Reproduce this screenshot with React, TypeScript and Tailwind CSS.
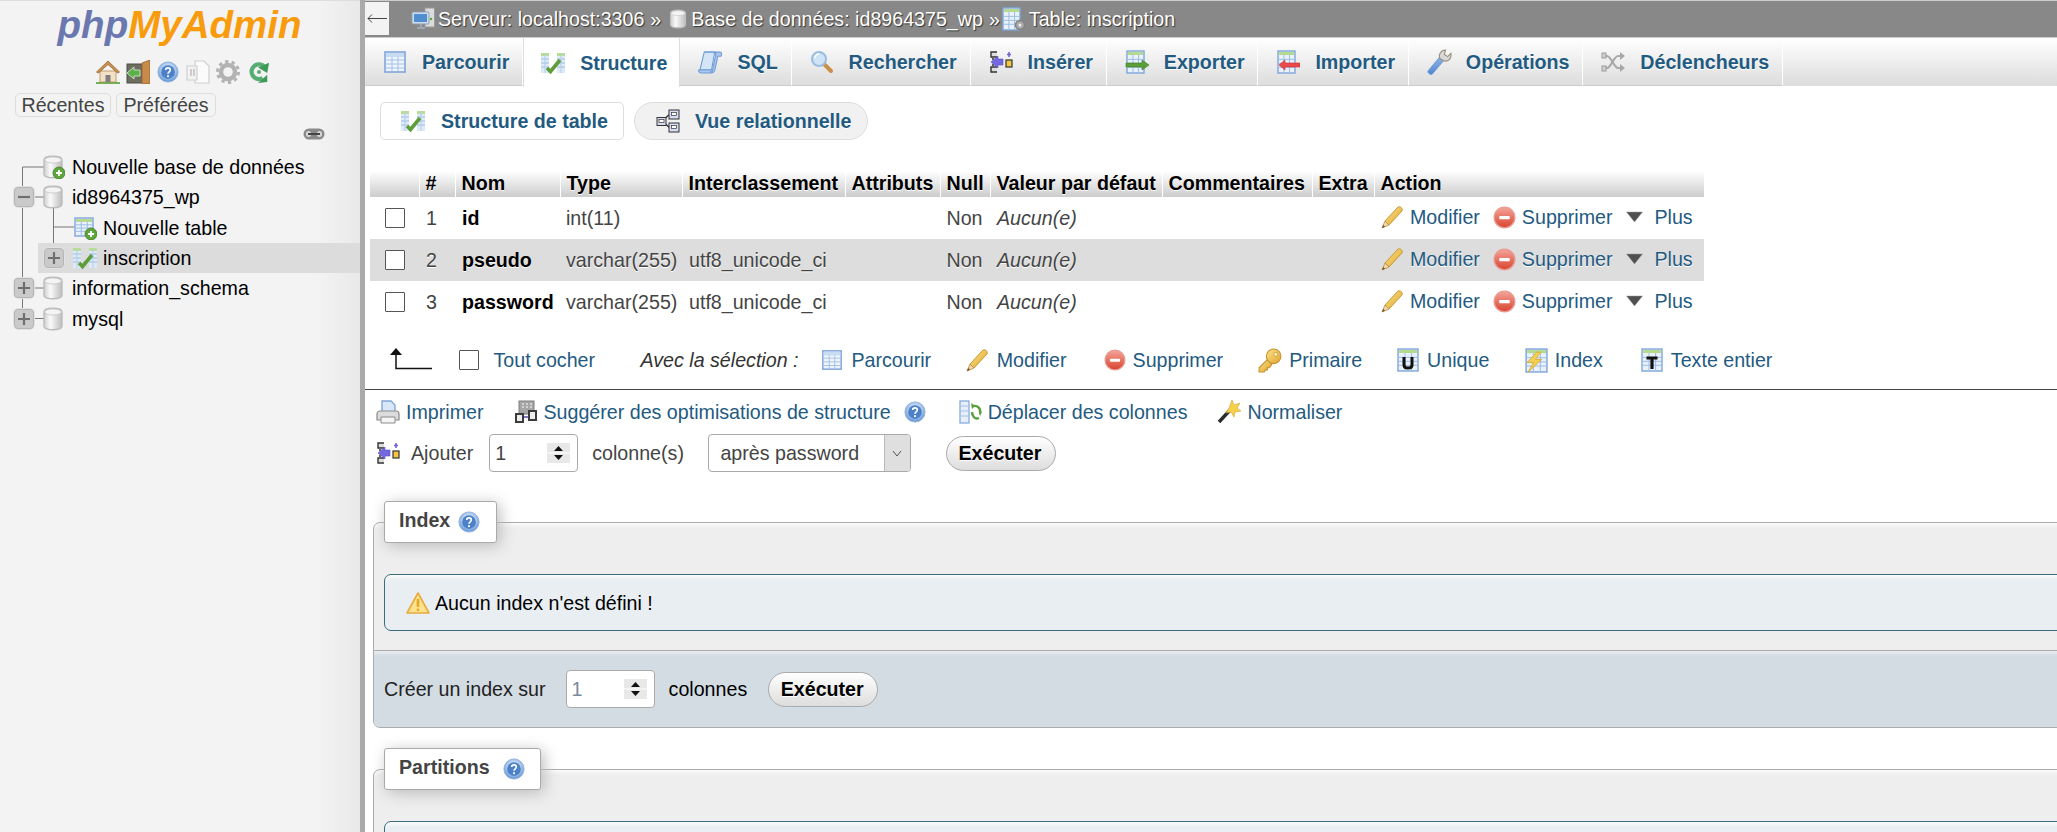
import React from "react";

type P = { s?: number };
const Defs = () => (
  <svg width="0" height="0" className="absolute">
    <defs>
      <linearGradient id="cyl" x1="0" x2="1" y1="0" y2="0">
        <stop offset="0" stopColor="#cfcfcf" /><stop offset="0.35" stopColor="#fafafa" /><stop offset="1" stopColor="#bdbdbd" />
      </linearGradient>
      <linearGradient id="blueb" x1="0" x2="0" y1="0" y2="1">
        <stop offset="0" stopColor="#8fb6e8" /><stop offset="1" stopColor="#4f86cf" />
      </linearGradient>
      <radialGradient id="help" cx="0.5" cy="0.4" r="0.6">
        <stop offset="0" stopColor="#ffffff" /><stop offset="0.6" stopColor="#a9c6ea" /><stop offset="1" stopColor="#5e93d4" />
      </radialGradient>
      <linearGradient id="red" x1="0" x2="0" y1="0" y2="1">
        <stop offset="0" stopColor="#f4a59a" /><stop offset="1" stopColor="#d9432f" />
      </linearGradient>
      <linearGradient id="yel" x1="0" x2="1" y1="0" y2="1">
        <stop offset="0" stopColor="#fbe38a" /><stop offset="1" stopColor="#e0a52c" />
      </linearGradient>
    </defs>
  </svg>
);

const Svg = ({ s = 24, children, w }: P & { children: React.ReactNode; w?: number }) => (
  <svg width={w ?? s} height={s} viewBox="0 0 24 24" className="shrink-0" preserveAspectRatio="none">
    {children}
  </svg>
);

const Grid = ({ x = 3, y = 2, w = 18, h = 20 }: { x?: number; y?: number; w?: number; h?: number }) => (
  <g>
    <rect x={x} y={y} width={w} height={h} fill="#e9f1fb" stroke="#7fa6da" strokeWidth="1.4" />
    <rect x={x + 1} y={y + 1} width={w - 2} height={3} fill="#b5d98f" />
    {[0.38, 0.56, 0.74].map((f) => (
      <line key={f} x1={x} x2={x + w} y1={y + h * f} y2={y + h * f} stroke="#9dbce3" strokeWidth="1" />
    ))}
    {[0.35, 0.68].map((f) => (
      <line key={f} y1={y + 4} y2={y + h} x1={x + w * f} x2={x + w * f} stroke="#9dbce3" strokeWidth="1" />
    ))}
  </g>
);
const Plus = () => (
  <g>
    <circle cx="18" cy="18" r="6" fill="#5da53c" stroke="#3f7d27" strokeWidth="0.8" />
    <path d="M15 18h6M18 15v6" stroke="#fff" strokeWidth="1.8" />
  </g>
);
const Cyl = () => (
  <g>
    <path d="M3 5c0-5 18-5 18 0v14c0 5-18 5-18 0z" fill="url(#cyl)" stroke="#bcbcbc" strokeWidth="1.4" />
    <ellipse cx="12" cy="5" rx="8.4" ry="3" fill="#f4f4f4" stroke="#c4c4c4" strokeWidth="0.8" />
  </g>
);
const Db = ({ s = 24 }: P) => <Svg s={s}><Cyl /></Svg>;
const DbNew = ({ s = 24 }: P) => <Svg s={s}><Cyl /><Plus /></Svg>;
const TableNew = ({ s = 24 }: P) => <Svg s={s}><Grid x={2} y={2} w={18} h={18} /><Plus /></Svg>;
const Browse = ({ s = 24 }: P) => (
  <Svg s={s}>
    <rect x="2" y="2" width="20" height="20" fill="#eef4fb" stroke="#7fa6da" strokeWidth="1.6" />
    <rect x="3" y="3" width="18" height="4" fill="#c7dbf2" />
    {[10, 14, 18].map((y) => <line key={y} x1="3" x2="21" y1={y} y2={y} stroke="#a4c1e6" />)}
    {[9, 15].map((x) => <line key={x} y1="7" y2="21" x1={x} x2={x} stroke="#a4c1e6" />)}
  </Svg>
);
const Structure = ({ s = 24 }: P) => (
  <Svg s={s}>
    <rect x="0" y="2" width="8" height="20" fill="#dfeaf7" />
    <rect x="16" y="2" width="8" height="20" fill="#dfeaf7" />
    <rect x="0" y="2" width="8" height="3" fill="#b9dc97" />
    <rect x="16" y="2" width="8" height="3" fill="#b9dc97" />
    {[8, 12, 16].map((y) => <path key={y} d={`M0 ${y}h8M16 ${y}h8`} stroke="#9dbce3" />)}
    <path d="M4 3v19M20 3v19" stroke="#b4cdea" />
    <path d="M6 17l3.500 3.500L19 9" fill="none" stroke="#5d9e3a" strokeWidth="3.600" />
  </Svg>
);
const Sql = ({ s = 25 }: P) => (
  <Svg s={s}>
    <path d="M6 3h15c2 0 2 3 1 4h-3l-3 14c-1 2-2 2-3 2H3c-2 0-3-2-2-3h11l.5 2 1 0L17 6c.3-2-1-3-2-3z" fill="#a9c8ee" stroke="#6f9bd6" strokeWidth="1" />
    <path d="M6 3h10l-3 17H2z" fill="#d5e5f8" stroke="#6f9bd6" strokeWidth="1" />
  </Svg>
);
const Search = ({ s = 24 }: P) => (
  <Svg s={s}>
    <path d="M14 14l7 7" stroke="#c9904a" strokeWidth="4" strokeLinecap="round" />
    <circle cx="9" cy="9" r="7" fill="#cfe3f7" stroke="#9bbde2" strokeWidth="2" />
    <path d="M5 8a4 4 0 0 1 4-4" stroke="#fff" strokeWidth="1.6" fill="none" />
  </Svg>
);
const Insert = ({ s = 24 }: P) => (
  <Svg s={s}>
    <path d="M8 2H2v5h6M8 17H2v5h6" fill="#ddd" stroke="#333" strokeWidth="1.4" />
    <path d="M3 9h2M3 12h2M3 15h2" stroke="#333" strokeWidth="1.4" />
    <path d="M2 12l7-6v3h5v6H9v3z" fill="#7468e0" stroke="#5a4dc4" strokeWidth="0.6" />
    <rect x="17" y="10" width="6" height="7" fill="#f3c743" stroke="#333" strokeWidth="1.2" />
    <path d="M20 2v5M18 4.500h4" stroke="#6f63d9" strokeWidth="1.6" />
  </Svg>
);
const Exp = ({ s = 24 }: P) => (
  <Svg s={s}>
    <Grid x={2} y={1} w={17} h={22} />
    <path d="M1 13h16v-3l7 5-7 5v-3H1z" fill="#5c9e38" stroke="#3f7d27" strokeWidth="0.6" />
  </Svg>
);
const Imp = ({ s = 24 }: P) => (
  <Svg s={s}>
    <Grid x={2} y={1} w={17} h={22} />
    <path d="M24 13H9v-3l-6 5 6 5v-3h15z" fill="#ec4a4a" stroke="#c93333" strokeWidth="0.6" />
  </Svg>
);
const Wrench = ({ s = 26 }: P) => (
  <Svg s={s}>
    <path d="M2 20L13 7l4 3L6 23c-2 1.500-5-1-4-3z" fill="url(#blueb)" stroke="#6f9bd6" strokeWidth="0.8" />
    <path d="M13 9c-2-4 1-8 5-8l-1 4 3 2 3-3c1 5-3 8-6 7z" fill="#d8d8d8" stroke="#9a8f7a" strokeWidth="1" />
  </Svg>
);
const Trigger = ({ s = 24 }: P) => (
  <Svg s={s}>
    <g fill="none" stroke="#a8a8a8" strokeWidth="2.200">
      <path d="M1 6h5c4 0 7 12 11 12h4" />
      <path d="M1 18h5c4 0 7-12 11-12h4" />
    </g>
    <path d="M19 2l5 4-5 4zM19 14l5 4-5 4z" fill="#a8a8a8" />
    <rect x="1" y="3" width="4" height="5" fill="#d0d0d0" stroke="#999" /><rect x="1" y="16" width="4" height="5" fill="#d0d0d0" stroke="#999" />
  </Svg>
);
const Relation = ({ s = 24 }: P) => (
  <Svg s={s}>
    <path d="M6 12L14 5M6 12l8 7" stroke="#333" fill="none" strokeWidth="1.4" />
    <rect x="1" y="8.500" width="9" height="8" fill="#d8dcf2" stroke="#333" />
    <rect x="13" y="1" width="10" height="9" fill="#d8dcf2" stroke="#333" />
    <rect x="13" y="14" width="10" height="9" fill="#d8dcf2" stroke="#333" />
    <rect x="15.500" y="3.500" width="5" height="3" fill="#fff" stroke="#333" strokeWidth="0.7" />
    <rect x="15.500" y="16.500" width="5" height="3" fill="#fff" stroke="#333" strokeWidth="0.7" />
    <rect x="3" y="10.500" width="5" height="3" fill="#fff" stroke="#333" strokeWidth="0.7" />
  </Svg>
);
const Pencil = ({ s = 24 }: P) => (
  <Svg s={s}>
    <path d="M6 16L19 2c2-1 5 1 4 4L10 20z" fill="url(#yel)" stroke="#c89a3a" strokeWidth="1" />
    <path d="M6 16l-3 7 7-3z" fill="#f1d6ac" stroke="#b58a45" strokeWidth="0.8" />
    <path d="M3 23l1.200-3 1.800 1.800z" fill="#7a4a1c" />
  </Svg>
);
const Del = ({ s = 24 }: P) => (
  <Svg s={s}>
    <circle cx="12" cy="12" r="10.800" fill="url(#red)" stroke="#e89b90" strokeWidth="1.400" />
    <rect x="6.500" y="10.500" width="11" height="3.400" rx="1" fill="#fff" />
  </Svg>
);
const Tri = () => (
  <svg width="17" height="12" viewBox="0 0 17 12" className="shrink-0">
    <path d="M0.500 1h16L8.500 11z" fill="#505050" stroke="#9a9a9a" strokeWidth="0.500" />
  </svg>
);
const Key = ({ s = 25 }: P) => (
  <Svg s={s}>
    <path d="M11 10L2 19v4h5l1-2h2v-2h2l2-3z" fill="url(#yel)" stroke="#c2912c" strokeWidth="1" />
    <circle cx="16" cy="8" r="7" fill="url(#yel)" stroke="#c2912c" strokeWidth="1" />
    <circle cx="18" cy="6" r="1.800" fill="#fff8d8" stroke="#c2912c" strokeWidth="0.7" />
  </Svg>
);
const LetterIcon = ({ s = 24, letter }: P & { letter: "U" | "T" }) => (
  <Svg s={s}>
    <Grid x={2} y={1} w={20} h={22} />
    {letter === "U" ? (
      <path d="M8 9v8c0 4 8 4 8 0V9" fill="none" stroke="#111" strokeWidth="3" />
    ) : (
      <path d="M6.500 10h11M12 10v11" fill="none" stroke="#111" strokeWidth="3.200" />
    )}
  </Svg>
);
const IndexIcon = ({ s = 25 }: P) => (
  <Svg s={s}>
    <Grid x={3} y={1} w={20} h={22} />
    <path d="M13 4L4 14h6l-5 9 13-12h-6l5-7z" fill="#f2cf50" stroke="#d8a92b" strokeWidth="0.8" />
  </Svg>
);
const Printer = ({ s = 24 }: P) => (
  <Svg s={s}>
    <path d="M6 1h9l4 4v9H6z" fill="#d9e7f8" stroke="#7fa6da" strokeWidth="1.400" />
    <path d="M1 14c0-2 2-3 3-3h16c2 0 3 1 3 3v6H1z" fill="#dcdcdc" stroke="#8b8b8b" strokeWidth="1.200" />
    <path d="M5 17h14v6H5z" fill="#f5f5f5" stroke="#8b8b8b" />
  </Svg>
);
const Suggest = ({ s = 24 }: P) => (
  <Svg s={s}>
    <rect x="5" y="1" width="15" height="13" fill="#a6a6a6" stroke="#7f7f7f" />
    <path d="M8 4h2M12 4h2M16 4h2M8 7h2M12 7h2M16 7h2" stroke="#dfdfdf" strokeWidth="1.400" />
    <rect x="1" y="13" width="9" height="10" fill="#3b3b3b" />
    <rect x="14" y="10" width="9" height="11" fill="#3b3b3b" />
    <rect x="3" y="15" width="5" height="6" fill="#eee" /><rect x="16" y="12" width="5" height="7" fill="#eee" />
    <path d="M10 17h4" stroke="#8271c9" strokeWidth="2" />
  </Svg>
);
const Help = ({ s = 22 }: P) => (
  <Svg s={s}>
    <circle cx="12" cy="12" r="11" fill="url(#help)" stroke="#8fb0dc" strokeWidth="1" />
    <circle cx="12" cy="12" r="7.500" fill="#4c80c8" />
    <path d="M9.500 9.800c0-3 5-3 5 0 0 2-2.500 2-2.500 4" fill="none" stroke="#fff" strokeWidth="1.800" />
    <circle cx="12" cy="16.500" r="1.100" fill="#fff" />
  </Svg>
);
const MoveCols = ({ s = 24 }: P) => (
  <Svg s={s}>
    <rect x="1" y="1" width="9" height="22" fill="#e6effa" stroke="#7fa6da" strokeWidth="1.200" />
    <path d="M1 6h9M1 11h9M1 16h9" stroke="#a4c1e6" />
    <path d="M14 6c5-1 8 3 7 7M20 18c-4 2-7-2-7-6" fill="none" stroke="#57a03a" strokeWidth="2.400" />
    <path d="M12 3l4 3-3 3zM23 12l-3 1 1 3" fill="#57a03a" />
  </Svg>
);
const Wand = ({ s = 24 }: P) => (
  <Svg s={s}>
    <path d="M2 22L14 9" stroke="#2b2b2b" strokeWidth="3.400" />
    <path d="M15 0l2 5 6-2-3 5 4 3-6 1-1 5-3-5-5 1 3-5z" fill="#f5d04d" stroke="#d6a52a" strokeWidth="0.600" />
  </Svg>
);
const Warn = ({ s = 24 }: P) => (
  <Svg s={s}>
    <path d="M12 2l11 20H1z" fill="#fbe28c" stroke="#e8ab3e" strokeWidth="1.600" strokeLinejoin="round" />
    <path d="M12 8v8" stroke="#e8a72c" strokeWidth="2.600" />
    <circle cx="12" cy="18.800" r="1.400" fill="#e8a72c" />
  </Svg>
);
const Server = ({ s = 24 }: P) => (
  <Svg s={s}>
    <rect x="14" y="1" width="9.500" height="19" fill="#dcdcdc" stroke="#9a9a9a" />
    <circle cx="20" cy="12" r="1.200" fill="#58a53a" />
    <rect x="1" y="5" width="17" height="12" rx="1" fill="#cfdcec" stroke="#8d9fb4" />
    <rect x="3" y="7" width="13" height="8" fill="#4f8ed0" />
    <path d="M6 20h8v2H6zM9 17h2v3H9z" fill="#9aa6b4" />
  </Svg>
);
const TableInfo = ({ s = 24 }: P) => (
  <Svg s={s}>
    <Grid x={1} y={1} w={17} h={22} />
    <circle cx="18" cy="18" r="4.500" fill="#a8a8a8" stroke="#808080" strokeWidth="1.400" />
    <circle cx="18" cy="18" r="1.500" fill="#eee" />
  </Svg>
);
const Home = ({ s = 24 }: P) => (
  <Svg s={s}>
    <path d="M0 22h24v2H0z" fill="#6fb055" />
    <path d="M4 11h16v11H4z" fill="#f2e1c4" stroke="#b08a55" strokeWidth="0.800" />
    <path d="M9.500 15h5v7h-5z" fill="#7f7f7f" />
    <path d="M0.500 12L12 1l11.500 11-2 1L12 4.500 2.500 13z" fill="#c98f4e" stroke="#9a6a34" strokeWidth="0.800" />
  </Svg>
);
const ExitIcon = ({ s = 24 }: P) => (
  <Svg s={s}>
    <rect x="1" y="4" width="17" height="19" fill="#6d6d60" stroke="#4c4c44" />
    <path d="M16 3l8-3v24h-8z" fill="#c88b4a" stroke="#96602c" strokeWidth="0.800" />
    <path d="M1 13l7-6v3h6v6H8v3z" fill="#5bb04a" stroke="#dff0d6" strokeWidth="0.800" />
  </Svg>
);
const Docs = ({ s = 24 }: P) => (
  <Svg s={s}>
    <path d="M9 1h9l5 5v17H9z" fill="#fbfbfb" stroke="#cfcfcf" strokeWidth="1.200" />
    <path d="M1 6h10v14H1z" fill="#f2f2f2" stroke="#cfcfcf" strokeWidth="1.200" />
    <path d="M5 9v7M8 9v7" stroke="#bdbdbd" strokeWidth="1.400" />
  </Svg>
);
const Gear = ({ s = 24 }: P) => (
  <Svg s={s}>
    <circle cx="12" cy="12" r="7" fill="none" stroke="#b2b2b2" strokeWidth="4.400" />
    <circle cx="12" cy="12" r="10.500" fill="none" stroke="#b2b2b2" strokeWidth="3" strokeDasharray="3.300 3.300" />
  </Svg>
);
const Reload = ({ s = 24 }: P) => (
  <Svg s={s}>
    <path d="M18 6.500A8 8 0 1 0 16 18.500" fill="none" stroke="#58ad75" strokeWidth="4.600" />
    <path d="M11 7l12-5-2 11zM11 24l10-9v8z" fill="#3f9a5a" />
    <circle cx="12" cy="12" r="2.200" fill="#58ad75" />
  </Svg>
);
const LinkIcon = () => (
  <svg width="22" height="12" viewBox="0 0 22 12" className="shrink-0">
    <rect x="0.500" y="0.500" width="21" height="11" rx="5.500" fill="#8a8a8a" />
    <rect x="3" y="3" width="5" height="6" rx="2.500" fill="#d8d8d8" />
    <rect x="14" y="3" width="5" height="6" rx="2.500" fill="#d8d8d8" />
    <path d="M5 6h12" stroke="#444" strokeWidth="2" />
  </svg>
);
const Spinner = () => (
  <svg width="23" height="20" viewBox="0 0 23 20" className="shrink-0">
    <rect width="23" height="20" fill="#e8e8e8" />
    <rect y="9.500" width="23" height="1" fill="#fff" />
    <path d="M11.500 3l4.500 5H7zM11.500 17l4.500-5H7z" fill="#111" />
  </svg>
);
const BackArrow = () => (
  <svg width="20" height="11" viewBox="0 0 20 11" className="shrink-0">
    <path d="M1 5.500h19M5 1.500L1 5.500l4 4" fill="none" stroke="#444" strokeWidth="1" />
  </svg>
);
const Expander = ({ minus }: { minus?: boolean }) => (
  <span className="w-[20px] h-[20px] rounded-[4px] bg-[#cacaca] border border-[#b5b5b5] flex items-center justify-center shrink-0 shadow-[0_0_0_1px_#e2e2e2]">
    <svg width="12" height="12" viewBox="0 0 12 12">
      <path d={minus ? "M0 6h12" : "M0 6h12M6 0v12"} stroke="#6f6f6f" strokeWidth="2.200" />
    </svg>
  </span>
);

const TreeRow = ({ children, active }: { children: React.ReactNode; active?: boolean }) => (
  <div className="h-[30.33px] flex items-center relative">
    {active && <div className="absolute left-[38px] right-0 top-0 bottom-0 bg-[#dcdcdc]" />}
    <div className="relative flex items-center text-black w-full">{children}</div>
  </div>
);
const DbRow = ({ name, icon, exp }: { name: string; icon: React.ReactNode; exp?: React.ReactNode }) => (
  <TreeRow>
    <span className="ml-[14px] w-[20px] shrink-0">{exp}</span>
    <span className="ml-[7px] w-[31px] shrink-0">{icon}</span>
    <span>{name}</span>
  </TreeRow>
);

const Sidebar = () => (
  <aside className="w-[360px] h-full shrink-0 border-t border-[#ddd] bg-[linear-gradient(to_right,#f3f3f3_88%,#e9e9e9)] flex flex-col">
    <div className="h-[56px] flex items-start justify-center pt-[2px] pr-[1px]">
      <span className="text-[38.5px] leading-[44px] font-bold italic text-[#f89c0e]">
        <span className="text-[#6b78b0]">php</span>MyAdmin
      </span>
    </div>
    <div className="flex items-center h-[26px] mt-[2px] ml-[96px]">
      <Home />
      <span className="ml-[6px]"><ExitIcon /></span>
      <span className="ml-[7px]"><Help /></span>
      <span className="ml-[7px]"><Docs /></span>
      <span className="ml-[6px]"><Gear /></span>
      <span className="ml-[8px]"><Reload s={22} /></span>
    </div>
    <div className="flex mt-[8px] ml-[15px] gap-[5px] text-[#444]">
      <span className="h-[24px] w-[96px] border border-[#ddd] rounded-[5px] flex items-center justify-center">Récentes</span>
      <span className="h-[24px] w-[100px] border border-[#ddd] rounded-[5px] flex items-center justify-center">Préférées</span>
    </div>
    <div className="h-[12px] mt-[11px] ml-[303px]"><LinkIcon /></div>
    <div className="relative mt-[12px]">
      <svg width="120" height="185" className="absolute left-0 top-0">
        <path d="M22.500 15V166.500M22.500 15H44M34 45H44M53.500 55V105M53.500 75H74M64 105H74M34 136H44M34 166.500H44" stroke="#777" strokeWidth="1" fill="none" />
      </svg>
      <DbRow name="Nouvelle base de données" icon={<DbNew />} />
      <DbRow name="id8964375_wp" icon={<Db />} exp={<Expander minus />} />
      <TreeRow>
        <span className="ml-[73px] w-[30px] shrink-0"><TableNew /></span>
        <span>Nouvelle table</span>
      </TreeRow>
      <TreeRow active>
        <span className="ml-[44px] w-[29px] shrink-0"><Expander /></span>
        <span className="w-[30px] shrink-0"><Structure /></span>
        <span>inscription</span>
      </TreeRow>
      <DbRow name="information_schema" icon={<Db />} exp={<Expander />} />
      <DbRow name="mysql" icon={<Db />} exp={<Expander />} />
    </div>
  </aside>
);

const Crumb = ({ icon, text, sep, className }: { icon: React.ReactNode; text: string; sep?: boolean; className?: string }) => (
  <span className={"flex items-center " + (className ?? "")}>
    {icon}
    <span className="ml-[3px]">{text}</span>
    {sep && <span className="ml-[6px]">»</span>}
  </span>
);
const TopBar = () => (
  <div className="h-[38px] shrink-0 bg-[#888] border-t border-b border-t-[#ccc] border-b-[#ccc] flex items-center text-white [text-shadow:1px_1px_1px_#333]">
    <div className="w-[24px] h-[33px] bg-[#f3f3f3] flex items-center justify-center self-start mt-[1px]"><BackArrow /></div>
    <div className="flex items-center ml-[22px] gap-[7px]">
      <Crumb icon={<Server />} text="Serveur: localhost:3306" sep />
      <Crumb icon={<Db s={20} />} text="Base de données: id8964375_wp" sep />
      <Crumb icon={<TableInfo />} text="Table: inscription" className="-ml-[5px]" />
    </div>
  </div>
);

const tabs: { label: string; icon: React.ReactNode; active?: boolean }[] = [
  { label: "Parcourir", icon: <Browse /> },
  { label: "Structure", icon: <Structure />, active: true },
  { label: "SQL", icon: <Sql /> },
  { label: "Rechercher", icon: <Search /> },
  { label: "Insérer", icon: <Insert /> },
  { label: "Exporter", icon: <Exp /> },
  { label: "Importer", icon: <Imp /> },
  { label: "Opérations", icon: <Wrench /> },
  { label: "Déclencheurs", icon: <Trigger /> },
];
const Tabs = () => (
  <div className="h-[48px] shrink-0 flex bg-[linear-gradient(#ffffff,#dcdcdc)] [text-shadow:0_1px_0_#fff]">
    {tabs.map((t) => (
      <div
        key={t.label}
        className={
          t.active
            ? "h-[49px] pl-[17px] pr-[12px] flex items-center font-bold text-[#235a81] bg-white border-l border-r border-[#ddd] relative"
            : "h-[48px] pl-[18px] pr-[12.800px] flex items-center font-bold text-[#235a81] border-r border-r-white border-b border-b-[#ccc]"
        }
      >
        <span className="w-[24px] mr-[15px] flex justify-center">{t.icon}</span>
        {t.label}
      </div>
    ))}
  </div>
);

const SubTabs = () => (
  <div className="flex shrink-0 mt-[16px] ml-[15px] gap-[10px] h-[38px] font-bold text-[#235a81] [text-shadow:0_1px_0_#fff]">
    <div className="w-[244px] border border-[#ddd] rounded-[5px] bg-white flex items-center pl-[20px]">
      <Structure />
      <span className="ml-[16px]">Structure de table</span>
    </div>
    <div className="w-[234px] border border-[#ddd] rounded-full bg-[#f1f1f1] flex items-center pl-[21px]">
      <Relation />
      <span className="ml-[15px]">Vue relationnelle</span>
    </div>
  </div>
);

const A = ({ children, className }: { children: React.ReactNode; className?: string }) => (
  <span className={"text-[#235a81] " + (className ?? "")}>{children}</span>
);
const Box = () => <span className="block w-[20px] h-[20px] border border-[#555] bg-white rounded-[1px]" />;

const Actions = () => (
  <div className="flex items-center -mt-[2px]">
    <span className="-ml-[2px]"><Pencil /></span>
    <A className="ml-[7px]">Modifier</A>
    <span className="ml-[13px]"><Del s={23} /></span>
    <A className="ml-[6px]">Supprimer</A>
    <span className="ml-[14px]"><Tri /></span>
    <A className="ml-[11px]">Plus</A>
  </div>
);
const heads = ["", "#", "Nom", "Type", "Interclassement", "Attributs", "Null", "Valeur par défaut", "Commentaires", "Extra", "Action"];
const rows = [
  ["1", "id", "int(11)", ""],
  ["2", "pseudo", "varchar(255)", "utf8_unicode_ci"],
  ["3", "password", "varchar(255)", "utf8_unicode_ci"],
];
const cols = [49, 36, 105, 122, 163, 95, 50, 172, 150, 62, 330];
const Table = () => (
  <table className="mt-[31px] ml-[5px] shrink-0 table-fixed border-collapse w-[1334px] [text-shadow:0_1px_0_#fff]">
    <colgroup>{cols.map((w, i) => <col key={i} width={w} />)}</colgroup>
    <thead>
      <tr className="h-[26px] bg-[linear-gradient(#ffffff,#cccccc)]">
        {heads.map((h, i) => (
          <th key={i} className={"text-left font-bold text-black pl-[6px] pr-[6px] pt-0 pb-[2px] whitespace-nowrap " + (i < 10 ? "border-r border-r-white" : "")}>{h}</th>
        ))}
      </tr>
    </thead>
    <tbody>
      {rows.map((r, i) => (
        <tr key={r[0]} className={i === 1 ? "h-[42px] bg-[#ddd]" : "h-[42px] bg-white"}>
          <td className="pl-[15px]"><Box /></td>
          <td className="pl-[7px] text-[#444]">{r[0]}</td>
          <td className="pl-[7px] font-bold text-black">{r[1]}</td>
          <td className="pl-[6px] text-[#444] whitespace-nowrap">{r[2]}</td>
          <td className="pl-[7px] text-[#444]">{r[3]}</td>
          <td />
          <td className="pl-[6.500px] text-[#444]">Non</td>
          <td className="pl-[7px] text-[#444] italic">Aucun(e)</td>
          <td />
          <td />
          <td className="pl-[7px]"><Actions /></td>
        </tr>
      ))}
    </tbody>
  </table>
);

const Arrow = () => (
  <svg width="43" height="24" viewBox="0 0 43 24" className="shrink-0">
    <path d="M7 5v15.500H43" fill="none" stroke="#111" strokeWidth="1.500" />
    <path d="M7 0l6 7H1z" fill="#111" />
  </svg>
);
const MultiItem = ({ icon, text, className, gapClass }: { icon: React.ReactNode; text: string; className: string; gapClass?: string }) => (
  <span className={"flex items-center " + className}>
    {icon}
    <A className={gapClass ?? "ml-[7px]"}>{text}</A>
  </span>
);
const BulkBar = () => (
  <div className="h-[42px] mt-[16px] ml-[23.500px] flex items-center shrink-0">
    <Arrow />
    <span className="ml-[27px]"><Box /></span>
    <A className="ml-[15px]">Tout cocher</A>
    <span className="ml-[45.500px] italic text-[#333]">Avec la sélection :</span>
    <MultiItem className="ml-[23px]" gapClass="ml-[8px]" icon={<Browse s={22} />} text="Parcourir" />
    <MultiItem className="ml-[33px]" gapClass="ml-[8.500px]" icon={<Pencil />} text="Modifier" />
    <MultiItem className="ml-[37px]" icon={<Del s={22} />} text="Supprimer" />
    <MultiItem className="ml-[33.500px]" gapClass="ml-[7.500px]" icon={<Key />} text="Primaire" />
    <MultiItem className="ml-[33.800px]" icon={<LetterIcon s={24} letter="U" />} text="Unique" />
    <MultiItem className="ml-[33.500px]" icon={<IndexIcon />} text="Index" />
    <MultiItem className="ml-[37px]" icon={<LetterIcon s={24} letter="T" />} text="Texte entier" />
  </div>
);

const NumberBox = ({ grey }: { grey?: boolean }) => (
  <div className="w-[89px] h-[38px] bg-white border border-[#aaa] rounded-[4px] flex items-center shrink-0">
    <span className={grey ? "ml-[5px] text-[#7a8a9a]" : "ml-[5px] text-[#444]"}>1</span>
    <span className="ml-auto mr-[7px]"><Spinner /></span>
  </div>
);
const ExecBtn = ({ className }: { className: string }) => (
  <div className={"w-[110px] h-[35px] rounded-full border border-[#aaa] bg-[linear-gradient(#ffffff,#dddddd)] flex items-center justify-center font-bold text-black [text-shadow:0_1px_0_#fff] pr-[2px] " + className}>Exécuter</div>
);

const StructureTools = () => (
  <div className="shrink-0">
    <div className="mt-[8px] border-t border-[#444] h-0" />
    <div className="mt-[3px] h-[38px] flex items-center ml-[11px]">
      <Printer />
      <A className="ml-[6px]">Imprimer</A>
      <span className="ml-[31px]"><Suggest /></span>
      <A className="ml-[5px]">Suggérer des optimisations de structure</A>
      <span className="ml-[13px]"><Help /></span>
      <span className="ml-[33px]"><MoveCols /></span>
      <A className="ml-[5px]">Déplacer des colonnes</A>
      <span className="ml-[30px]"><Wand /></span>
      <A className="ml-[6px]">Normaliser</A>
    </div>
    <div className="mt-[3px] h-[38px] flex items-center ml-[11px] text-[#444]">
      <Insert />
      <span className="ml-[11px]">Ajouter</span>
      <span className="ml-[16px]"><NumberBox /></span>
      <span className="ml-[14px]">colonne(s)</span>
      <div className="ml-[24.500px] w-[202.500px] h-[38px] bg-white border border-[#aaa] rounded-[4px] flex items-center overflow-hidden">
        <span className="ml-[11px]">après password</span>
        <span className="ml-auto w-[26px] h-full bg-[#dfdfdf] border-l border-[#bbb] flex items-center justify-center">
          <svg width="10" height="7" viewBox="0 0 10 7"><path d="M1 1l4 5 4-5" fill="none" stroke="#555" /></svg>
        </span>
      </div>
      <ExecBtn className="ml-[35px]" />
    </div>
  </div>
);

const Legend = ({ text, widthClass, helpClass }: { text: string; widthClass: string; helpClass: string }) => (
  <div className={"relative -mt-[22px] ml-[10px] h-[42px] flex items-center bg-white border border-[#aaa] rounded-[3px] shadow-[3px_3px_15px_#bbb] font-bold text-[#444] pl-[14px] " + widthClass}>
    <span className="-mt-[4px]">{text}</span>
    <span className={helpClass}><Help /></span>
  </div>
);
const Notice = ({ text }: { text?: string }) => (
  <div className="ml-[10px] mr-[-10px] mt-[31px] h-[57px] bg-[#e8eef1] border border-[#3a6c7b] rounded-[7px] flex items-center pl-[21px] shadow-[inset_0_5px_4px_-3px_#fff] text-black">
    {text && <Warn />}
    {text && <span className="ml-[5px]">{text}</span>}
  </div>
);
const Fieldset = ({ children, className }: { children: React.ReactNode; className: string }) => (
  <div className={"ml-[8px] mr-[-20px] border border-[#aaa] rounded-tl-[7px] rounded-bl-[7px] bg-[#eee] shadow-[inset_0_5px_4px_-3px_#fff] shrink-0 " + className}>
    {children}
  </div>
);

const Main = () => (
  <main className="flex-1 min-w-0 h-full flex flex-col overflow-hidden bg-white border-l-[5px] border-[#aaa]">
    <TopBar />
    <Tabs />
    <SubTabs />
    <Table />
    <BulkBar />
    <StructureTools />
    <Fieldset className="mt-[50px]">
      <Legend text="Index" widthClass="w-[113px]" helpClass="ml-[8px]" />
      <Notice text="Aucun index n'est défini !" />
      <div className="mt-[19px] h-[77px] bg-[#d3dce3] border-t border-[#aaa] rounded-bl-[7px] flex items-center pl-[10px] text-black shadow-[inset_0_5px_4px_-3px_#eef1f4]">
        <span className="text-[#222]">Créer un index sur</span>
        <span className="ml-[20px]"><NumberBox grey /></span>
        <span className="ml-[14px]">colonnes</span>
        <ExecBtn className="ml-[21px]" />
      </div>
    </Fieldset>
    <Fieldset className="mt-[41px] h-[200px]">
      <Legend text="Partitions" widthClass="w-[157px]" helpClass="ml-[13px]" />
      <Notice />
    </Fieldset>
  </main>
);

export default function App() {
  return (
    <div className="w-[2057px] h-[832px] overflow-hidden flex text-[19.65px] leading-[24px] font-['Liberation_Sans',Arial,sans-serif] bg-white">
      <Defs />
      <Sidebar />
      <Main />
    </div>
  );
}
